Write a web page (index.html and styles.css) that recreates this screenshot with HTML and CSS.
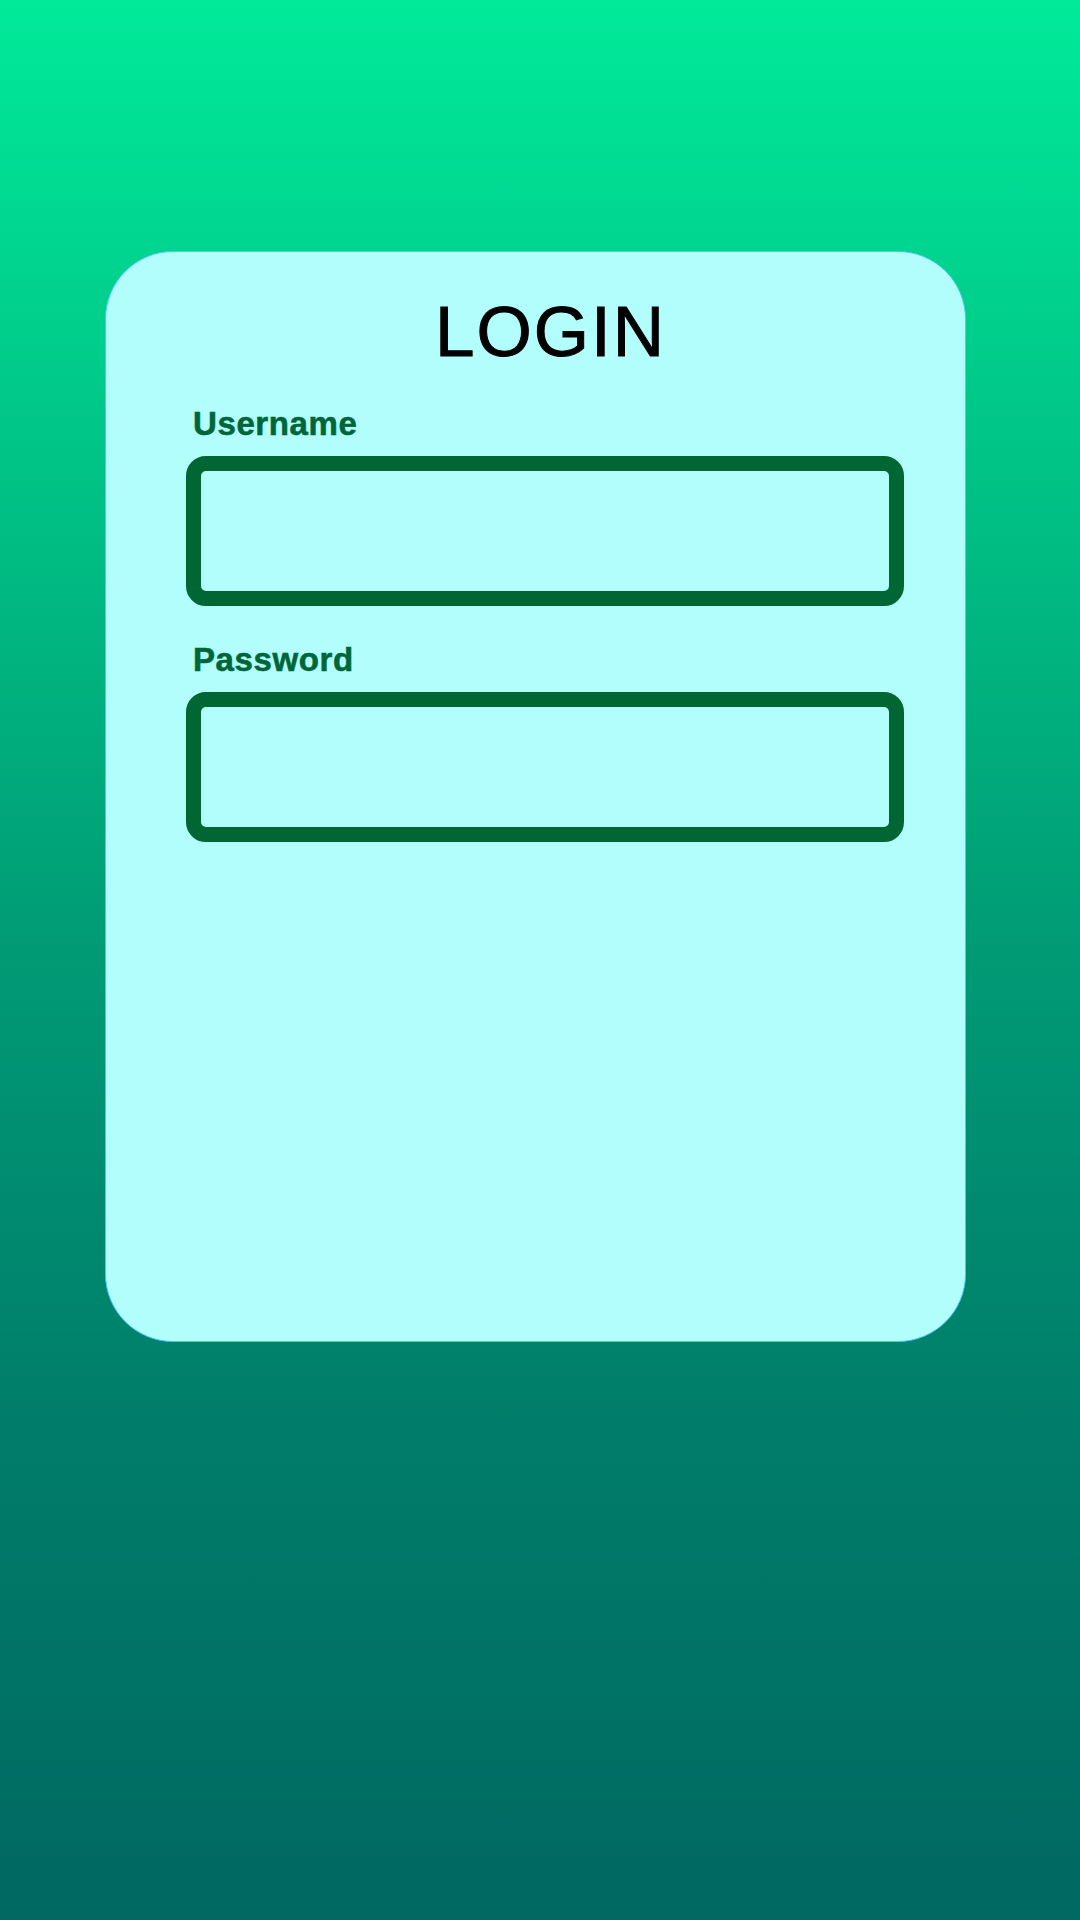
FILE: index.html
```html
<!DOCTYPE html>
<html lang="en">
<head>
<meta charset="utf-8">
<title>Login</title>
<link rel="stylesheet" href="styles.css">
</head>
<body>
<div class="page">
  <form class="card">
    <h1 class="title">LOGIN</h1>
    <div class="field">
      <label class="label" for="username">Username</label>
      <input class="input" id="username" type="text">
    </div>
    <div class="field field-second">
      <label class="label" for="password">Password</label>
      <input class="input" id="password" type="password">
    </div>
  </form>
</div>
</body>
</html>
```
FILE: styles.css
```css
html, body {
  margin: 0;
  padding: 0;
}
body {
  width: 1080px;
  height: 1920px;
  background: linear-gradient(180deg, #00ea9a 0%, #00c285 25%, #009a75 50%, #007c6a 75%, #006861 100%);
  font-family: "Liberation Sans", Arial, sans-serif;
  overflow: hidden;
}
.page {
  padding-top: 251px;
  padding-left: 105px;
}
.card {
  box-sizing: border-box;
  width: 861px;
  height: 1091px;
  background: #b2fefc;
  border: 1px solid #4fc8ea;
  border-radius: 68px;
  padding: 44px 62px 0 80px;
  display: flex;
  flex-direction: column;
}
.title {
  margin: 0 0 40px 0;
  padding-left: 12px;
  font-size: 71px;
  line-height: 71px;
  font-weight: 400;
  letter-spacing: 2px;
  text-align: center;
  color: #000;
  -webkit-text-stroke: 1px #000;
}
.field {
  display: flex;
  flex-direction: column;
  gap: 16px;
}
.field-second {
  margin-top: 37px;
}
.label {
  font-size: 33px;
  line-height: 33px;
  font-weight: 700;
  color: #00663a;
  padding-left: 7px;
  letter-spacing: 0.6px;
  -webkit-text-stroke: 0.6px #00663a;
}
.input {
  box-sizing: border-box;
  width: 718px;
  height: 150px;
  margin: 0;
  border: 15px solid #006633;
  border-radius: 20px;
  background: transparent;
  outline: none;
  font-size: 33px;
}
```
